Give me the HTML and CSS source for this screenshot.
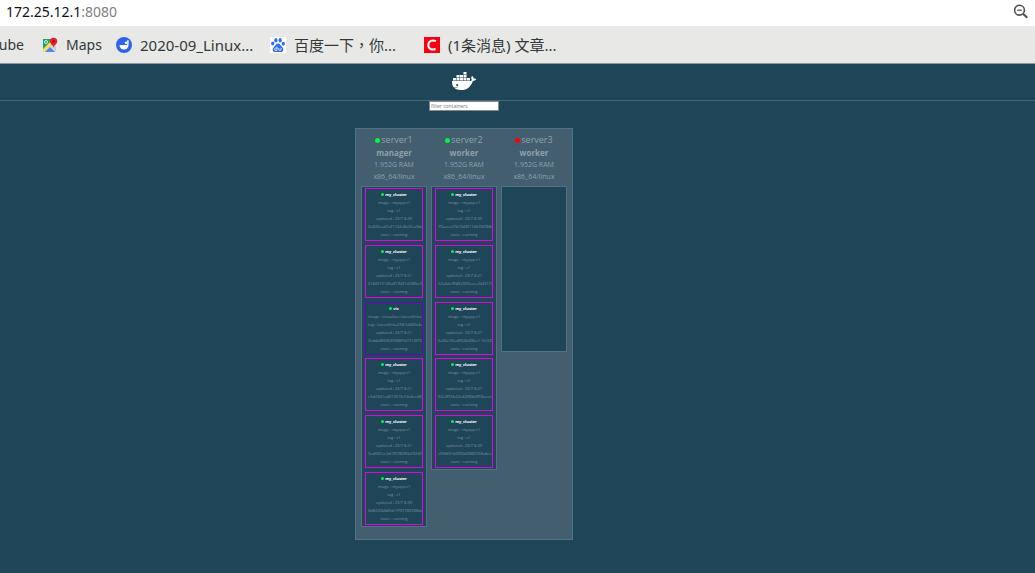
FILE: index.html
```html
<!DOCTYPE html>
<html lang="en">
<head>
<meta charset="utf-8">
<title>Visualizer</title>
<link rel="stylesheet" href="styles.css">
</head>
<body>
<div class="address-bar">
  <div class="url"><span class="host">172.25.12.1</span>:8080</div>
  <button class="zoom-button" type="button" aria-label="Zoom out">
    <svg width="16" height="16" viewBox="0 0 16 16" fill="none" stroke="#505050"><circle cx="6.500" cy="6.200" r="4.900" stroke-width="1.600"/><path d="M4.200 6.200h4.600" stroke-width="1.300"/><path d="M10 9.700l4.200 4.100" stroke-width="2"/></svg>
  </button>
</div>
<nav class="bookmarks">
  <a class="bookmark clipped" href="#">YouTube</a>
  <a class="bookmark" href="#">
    <svg width="16" height="16" viewBox="0 0 16 16"><path d="M1 2h13v13H1z" fill="#dadada"/><path d="M1 2h9v5L1 15z" fill="#1fa463"/><path d="M1 12l9-9 2 2-10 10H1z" fill="#fddc4d"/><path d="M3 15l5-5 5 5z" fill="#4a89f3"/><path d="M9 9l5 5V8z" fill="#cfcfcf"/><circle cx="4" cy="5" r="1.500" fill="none" stroke="#fff" stroke-width=".8"/><path d="M11.500 11C11.300 8 8 7.500 8 4.300a3.600 3.600 0 0 1 7.200 0C15.200 7.500 11.800 8 11.500 11z" fill="#e8202a"/><circle cx="11.600" cy="4.300" r="1.200" fill="#8c1416"/></svg>
    <span>Maps</span>
  </a>
  <a class="bookmark long" href="#">
    <svg width="16" height="16" viewBox="0 0 16 16"><circle cx="8" cy="8" r="8" fill="#2e63ee"/><path d="M3.500 8h9a4.500 4.500 0 0 1-9 0z" fill="#fff"/><path d="M11.200 3.200h1.400V8h-1.400z" fill="#fff"/><circle cx="10" cy="5.800" r="1.300" fill="#fff"/></svg>
    <span>2020-09_Linux...</span>
  </a>
  <a class="bookmark long" href="#">
    <svg width="16" height="16" viewBox="0 0 16 16"><path fill="#fff" d="M0 0h16v16H0z"/><g fill="#2f6ff0"><ellipse cx="5.900" cy="3.200" rx="1.600" ry="2.200"/><ellipse cx="10.200" cy="3.200" rx="1.600" ry="2.200"/><ellipse cx="2.700" cy="6.600" rx="1.600" ry="2"/><ellipse cx="13.300" cy="6.800" rx="1.600" ry="2"/><path d="M8 6.500c2 0 2.500 2 4 3.200 1.700 1.400 2 5.300-1.200 5.300H5.200C2 15 2.200 11.300 4 9.900 5.500 8.700 6 6.500 8 6.500z"/></g><path d="M7 9.500v4H5.800a1.200 1.200 0 0 1 0-2.400H7M8.800 11v1.600c0 1.200 2.200 1.200 2.200 0V11" fill="none" stroke="#fff" stroke-width=".8"/></svg>
    <span>百度一下，你...</span>
  </a>
  <a class="bookmark long" href="#">
    <svg width="16" height="16" viewBox="0 0 16 16"><path fill="#fc0012" d="M0 0h16v16H0z"/><path d="M12 4.200C8.500 2.500 4.500 3.800 4.300 8c0 4 3.500 5.300 7.300 4" fill="none" stroke="#fff" stroke-width="2"/></svg>
    <span>(1条消息) 文章...</span>
  </a>
</nav>

<main class="page">
  <header class="brand">
    <svg width="26" height="20" viewBox="0 0 26 20"><g fill="#fff"><path d="M1 9h18.500c.9 0 1.300-.5 1.300-1.200-.9-1-.7-2.600.2-3.700 1 .5 1.600 1.500 1.600 2.500 1-.2 2 0 2.700.5-.6 1.300-1.900 1.900-3.400 1.800C19.900 14.500 16.300 18 10 18 4.300 18 .6 15 1 9z"/><path d="M2 6h3v2.500H2zM5.500 6h3v2.500h-3zM9 6h3v2.500H9zM12.500 6h3v2.500h-3zM16 6h3v2.500h-3zM5.500 3h3v2.500h-3zM9 3h3v2.500H9zM12.500 3h3v2.500h-3zM12.500 0h3v2.500h-3z"/></g><circle cx="6.200" cy="13" r="1.100" fill="#1f4559"/><path d="M2 15.500c2.200.4 4 .1 5.200-.9" fill="none" stroke="#1f4559" stroke-width=".5"/></svg>
  </header>
  <div class="filter"><input class="filter-input" type="text" placeholder="filter containers" aria-label="filter containers"></div>
  <div class="board">
  <section class="cluster">
    <article class="node">
      <div class="node-head"><div class="node-name"><i class="dot"></i>server1</div><strong class="role">manager</strong><div>1.952G RAM</div><div>x86_64/linux</div></div>
      <ul class="tasks">
        <li class="task"><b><i class="dot"></i>my_cluster</b><span>image : myapp:v1</span><span>tag : v1</span><span>updated : 23/7 8:39</span><span>0a826ead7af1102e8a2fea0bda31c8</span><span>state : running</span></li>
        <li class="task"><b><i class="dot"></i>my_cluster</b><span>image : myapp:v1</span><span>tag : v1</span><span>updated : 23/7 8:21</span><span>0184215145a819431d28fbe54191a9</span><span>state : running</span></li>
        <li class="task viz"><b><i class="dot"></i>viz</b><span>image : visualizer:latest@sha256:54</span><span>tag : latest@sha256:54d65cbcbff52e</span><span>updated : 23/7 8:21</span><span>3cdda8fd963f388f7d7210f7552d71</span><span>state : running</span></li>
        <li class="task"><b><i class="dot"></i>my_cluster</b><span>image : myapp:v1</span><span>tag : v1</span><span>updated : 23/7 8:21</span><span>e5d2341ed21351fe74cdced6f96179</span><span>state : running</span></li>
        <li class="task"><b><i class="dot"></i>my_cluster</b><span>image : myapp:v1</span><span>tag : v1</span><span>updated : 23/7 8:21</span><span>3ed087ec2d1f978095b592d7ee025b</span><span>state : running</span></li>
        <li class="task"><b><i class="dot"></i>my_cluster</b><span>image : myapp:v1</span><span>tag : v1</span><span>updated : 23/7 8:39</span><span>8d8243b8d5d17f97780398da82ec7e</span><span>state : running</span></li>
      </ul>
    </article>
    <article class="node">
      <div class="node-head"><div class="node-name"><i class="dot"></i>server2</div><strong class="role">worker</strong><div>1.952G RAM</div><div>x86_64/linux</div></div>
      <ul class="tasks">
        <li class="task"><b><i class="dot"></i>my_cluster</b><span>image : myapp:v1</span><span>tag : v1</span><span>updated : 23/7 8:39</span><span>79aece27b10d3f11b67bf268d2b16f</span><span>state : running</span></li>
        <li class="task"><b><i class="dot"></i>my_cluster</b><span>image : myapp:v1</span><span>tag : v1</span><span>updated : 23/7 8:21</span><span>52a6de9fd02303aece2bf31770a8a5</span><span>state : running</span></li>
        <li class="task"><b><i class="dot"></i>my_cluster</b><span>image : myapp:v1</span><span>tag : v1</span><span>updated : 23/7 8:21</span><span>6a66e93ed902b306cc11fe320070a9</span><span>state : running</span></li>
        <li class="task"><b><i class="dot"></i>my_cluster</b><span>image : myapp:v1</span><span>tag : v1</span><span>updated : 23/7 8:21</span><span>32c2f35b22e42f90b3f59acecd2ade</span><span>state : running</span></li>
        <li class="task"><b><i class="dot"></i>my_cluster</b><span>image : myapp:v1</span><span>tag : v1</span><span>updated : 23/7 8:39</span><span>c05fd31b0f93d0886392bdce77fad7</span><span>state : running</span></li>
      </ul>
    </article>
    <article class="node">
      <div class="node-head"><div class="node-name"><i class="dot down"></i>server3</div><strong class="role">worker</strong><div>1.952G RAM</div><div>x86_64/linux</div></div>
      <ul class="tasks"></ul>
    </article>
  </section>
  </div>
</main>
</body>
</html>
```
FILE: styles.css
```css
* { box-sizing: border-box; }
body {
  margin: 0;
  min-height: 100vh;
  background: #1f4559;
  font-family: "Open Sans", sans-serif;
}
.address-bar {
  display: flex;
  align-items: center;
  justify-content: space-between;
  height: 26px;
  padding: 0 6px 2px;
  background: #fff;
  color: #808080;
  font: 14px/24px "Noto Sans", sans-serif;
}
.host { color: #111; }
.zoom-button { display: flex; padding: 0; border: 0; background: none; }
.bookmarks {
  display: grid;
  grid-template-columns: 25px 56px 136px 136px 136px;
  column-gap: 18px;
  height: 38px;
  background: #e8e8e6;
  border-bottom: 1px solid #8c989c;
  overflow: hidden;
}
.bookmark {
  display: flex;
  align-items: center;
  gap: 8px;
  color: #33393b;
  font: 14px/20px "Noto Sans", "Noto Sans CJK TC", sans-serif;
  text-decoration: none;
  white-space: nowrap;
}
.bookmarks { grid-template-columns: 24px 56px 136px 136px 136px; }
.long { font-size: 15px; }
.bookmark svg { flex: none; }
.clipped { justify-content: flex-end; }
.brand {
  display: flex;
  justify-content: center;
  height: 37px;
  padding: 8px 107px 0 0;
  border-bottom: 1px solid #42677c;
}
.filter { display: flex; justify-content: center; padding-right: 107px; }
.filter-input {
  width: 70px;
  height: 10px;
  padding: 0 1px;
  border: 1px solid #8a8a8a;
  background: #fff;
  font: 5px/8px "Open Sans", sans-serif;
}
.filter-input::placeholder { color: #777; }
.board {
  display: flex;
  justify-content: center;
  padding: 17px 107px 33px 0;
}
.cluster {
  display: flex;
  align-items: flex-start;
  gap: 4px;
  padding: 5px 5px 12px;
  border: 1px solid #4f7286;
  background: #425e6f;
}
.node { width: 66px; }
.node-head {
  color: #8fa1ab;
  font-size: 7px;
  line-height: 12px;
  text-align: center;
  white-space: nowrap;
  padding-bottom: 3px;
}
.node-name { font-size: 9px; }
.role { display: block; font-size: 8px; line-height: 13px; }
.dot {
  display: inline-block;
  width: 5px;
  height: 5px;
  margin-right: 1px;
  border-radius: 50%;
  background: #00f53c;
}
.down { background: #f00; }
.tasks {
  min-height: 166px;
  margin: 0;
  padding: 1px 3px 0;
  border: 1px solid #4f7286;
  background: #1f4559;
  list-style: none;
}
.task {
  height: 53px;
  margin-bottom: 4px;
  padding: 2px;
  border: 1px solid #e600e6;
  overflow: hidden;
  color: #7e939f;
  font-size: 4px;
  line-height: 8px;
  text-align: center;
  white-space: nowrap;
}
.task:nth-child(3n) { margin-bottom: 3px; }
.task:last-child { margin-bottom: 1px; }
.task b, .task span { display: block; }
.task b { color: #fff; }
.task .dot { width: 3px; height: 3px; }
.viz { border-color: #6a00c0; }
```
